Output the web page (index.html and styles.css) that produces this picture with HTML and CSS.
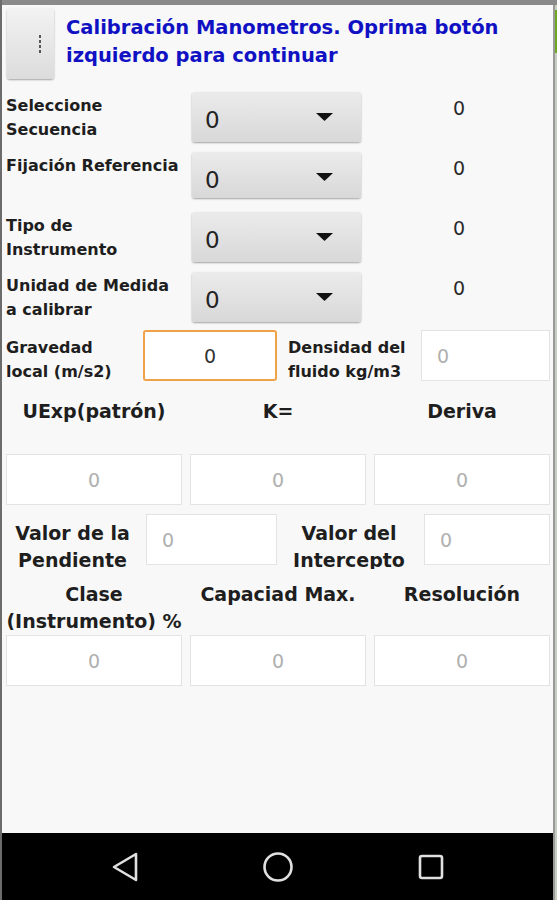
FILE: index.html
```html
<!DOCTYPE html>
<html lang="es">
<head>
    <meta charset="UTF-8">
    <meta name="viewport" content="width=device-width, initial-scale=1.0">
    <title>Calibración Manometros</title>
    <link rel="stylesheet" href="styles.css">
</head>
<body>
    <div class="device">
        <div class="screen">
            <div class="main">
                <header class="header">
                    <button class="menu-btn" aria-label="Menú">
                        <span class="dot"></span><span class="dot"></span><span class="dot"></span><span class="dot"></span>
                    </button>
                    <h1 class="title">Calibración Manometros. Oprima botón izquierdo para continuar</h1>
                </header>

                <section class="selects">
                    <div class="select-row">
                        <div class="label">Seleccione<br>Secuencia</div>
                        <div class="spinner"><span>0</span><svg class="caret" viewBox="0 0 17 8"><path d="M0 0H17L8.5 8Z"/></svg></div>
                        <div class="value">0</div>
                    </div>
                    <div class="select-row">
                        <div class="label">Fijación Referencia</div>
                        <div class="spinner"><span>0</span><svg class="caret" viewBox="0 0 17 8"><path d="M0 0H17L8.5 8Z"/></svg></div>
                        <div class="value">0</div>
                    </div>
                    <div class="select-row">
                        <div class="label">Tipo de<br>Instrumento</div>
                        <div class="spinner"><span>0</span><svg class="caret" viewBox="0 0 17 8"><path d="M0 0H17L8.5 8Z"/></svg></div>
                        <div class="value">0</div>
                    </div>
                    <div class="select-row">
                        <div class="label">Unidad de Medida<br>a calibrar</div>
                        <div class="spinner"><span>0</span><svg class="caret" viewBox="0 0 17 8"><path d="M0 0H17L8.5 8Z"/></svg></div>
                        <div class="value">0</div>
                    </div>
                </section>

                <section class="pair-row gravity">
                    <div class="label">Gravedad<br>local (m/s2)</div>
                    <div class="field focused">0</div>
                    <div class="label side">Densidad del<br>fluido kg/m3</div>
                    <div class="field left hint">0</div>
                </section>

                <section class="heads first">
                    <div>UExp(patrón)</div>
                    <div>K=</div>
                    <div>Deriva</div>
                </section>
                <section class="triple boxes-a">
                    <div class="field hint">0</div>
                    <div class="field hint">0</div>
                    <div class="field hint">0</div>
                </section>

                <section class="pair-row slope">
                    <div class="clip-label">Valor de la<br>Pendiente</div>
                    <div class="field left hint">0</div>
                    <div class="clip-label">Valor del<br>Intercepto</div>
                    <div class="field left hint">0</div>
                </section>

                <section class="heads second">
                    <div>Clase<br>(Instrumento) %</div>
                    <div>Capaciad Max.</div>
                    <div>Resolución</div>
                </section>
                <section class="triple boxes-b">
                    <div class="field hint">0</div>
                    <div class="field hint">0</div>
                    <div class="field hint">0</div>
                </section>
            </div>

            <nav class="navbar">
                <svg class="nav-icon back" viewBox="0 0 28 32"><path d="M3 16L25 3V29Z"/></svg>
                <svg class="nav-icon home" viewBox="0 0 32 32"><circle cx="16" cy="16" r="13.5"/></svg>
                <svg class="nav-icon recent" viewBox="0 0 28 28"><rect x="3" y="3" width="22" height="22" rx="2"/></svg>
            </nav>
        </div>
        <div class="edge"><div class="edge-green"></div></div>
    </div>
</body>
</html>
```

FILE: styles.css
```css
* {
    margin: 0;
    padding: 0;
    box-sizing: border-box;
    font-family: 'DejaVu Sans', 'Roboto', sans-serif;
}

body {
    background-color: #8a8a8a;
    width: 557px;
    height: 900px;
    overflow: hidden;
}

.device {
    display: flex;
    height: 900px;
    padding-top: 5px;
    padding-left: 2px;
    background: linear-gradient(to right, #6c6c6c 0, #6c6c6c 2px, transparent 2px);
}

.screen {
    width: 551px;
    display: flex;
    flex-direction: column;
    background-color: #f8f8f8;
}

.main {
    flex: 1;
    overflow: hidden;
}

.edge {
    width: 4px;
    border-left: 2px solid #9a9a9a;
    background-color: #c8cfc2;
}

.edge-green {
    margin-top: 5px;
    height: 43px;
    background-color: #6fa81e;
}

/* header */
.header {
    display: flex;
    align-items: flex-start;
    height: 87px;
}

.menu-btn {
    flex-shrink: 0;
    width: 47px;
    height: 71px;
    margin: 3px 0 0 5px;
    border: none;
    border-radius: 3px;
    background: linear-gradient(#f2f2f2, #dcdcdc);
    box-shadow: 0 1px 2px rgba(0, 0, 0, 0.35);
    display: flex;
    flex-direction: column;
    align-items: center;
    justify-content: center;
    gap: 2px;
    padding-left: 18px;
}

.dot {
    width: 2px;
    height: 3px;
    background-color: #555;
}

.title {
    margin: 9px 0 0 12px;
    font-size: 19.5px;
    font-weight: bold;
    line-height: 28px;
    color: #1111c4;
}

/* spinner rows */
.selects {
    display: flex;
    flex-direction: column;
    gap: 14px;
}

.select-row {
    display: grid;
    grid-template-columns: 190px 169px 1fr;
    height: 46px;
}

.label {
    font-size: 16px;
    font-weight: bold;
    line-height: 24px;
    color: #1e1e1e;
    padding: 2px 0 0 4px;
    white-space: nowrap;
}

.spinner {
    position: relative;
    border-radius: 3px;
    background: linear-gradient(#ebebeb, #d8d8d8);
    box-shadow: 0 1px 2px rgba(0, 0, 0, 0.35);
    font-size: 23px;
    color: #222;
    padding: 15px 0 0 13px;
}

.caret {
    position: absolute;
    right: 28px;
    top: 21px;
    width: 17px;
    height: 8px;
    fill: #111;
}

.value {
    font-size: 19px;
    color: #2a2a2a;
    text-align: center;
    padding: 5px 0 0 4px;
}

/* text boxes */
.field {
    background-color: #ffffff;
    border: 1px solid #e3e3e3;
    height: 51px;
    font-size: 19px;
    display: flex;
    align-items: center;
    justify-content: center;
    color: #333;
}

.field.left {
    justify-content: flex-start;
    padding-left: 15px;
}

.field.hint {
    color: #b0b0b0;
}

.field.focused {
    border: 2px solid #f0a24a;
    border-radius: 3px;
}

.pair-row {
    display: grid;
    grid-template-columns: 141px 134px 144px 129px;
}

.gravity {
    margin-top: 12px;
}

.gravity .label {
    padding-top: 6px;
}

.gravity .label.side {
    padding-left: 11px;
}

.slope {
    margin-top: 9px;
    height: 55px;
}

.slope .field {
    margin-left: 3px;
}

.clip-label {
    margin-top: 6px;
    height: 49px;
    overflow: hidden;
    text-align: center;
    font-size: 19px;
    font-weight: bold;
    line-height: 27px;
    color: #1e1e1e;
    white-space: nowrap;
}

/* headings above triple rows */
.heads {
    display: grid;
    grid-template-columns: repeat(3, 1fr);
    gap: 8px;
    padding: 0 3px 0 4px;
    text-align: center;
    font-size: 19px;
    font-weight: bold;
    color: #1e1e1e;
    line-height: 27px;
    white-space: nowrap;
}

.heads.first {
    margin-top: 14px;
    height: 30px;
}

.heads.second {
    margin-top: 12px;
    height: 49px;
    overflow: hidden;
}

.triple {
    display: grid;
    grid-template-columns: repeat(3, 1fr);
    gap: 8px;
    padding: 0 3px 0 4px;
}

.boxes-a {
    margin-top: 26px;
}

.boxes-b {
    margin-top: 5px;
}

/* android nav bar */
.navbar {
    height: 67px;
    background-color: #000;
    display: grid;
    grid-template-columns: repeat(3, 153px);
    justify-items: center;
    align-items: center;
    padding-left: 46px;
}

.nav-icon {
    fill: none;
    stroke: #e0e0e0;
    stroke-width: 2.6;
    stroke-linejoin: round;
}

.back {
    width: 28px;
    height: 32px;
}

.home {
    width: 32px;
    height: 32px;
}

.recent {
    width: 28px;
    height: 28px;
}
```
